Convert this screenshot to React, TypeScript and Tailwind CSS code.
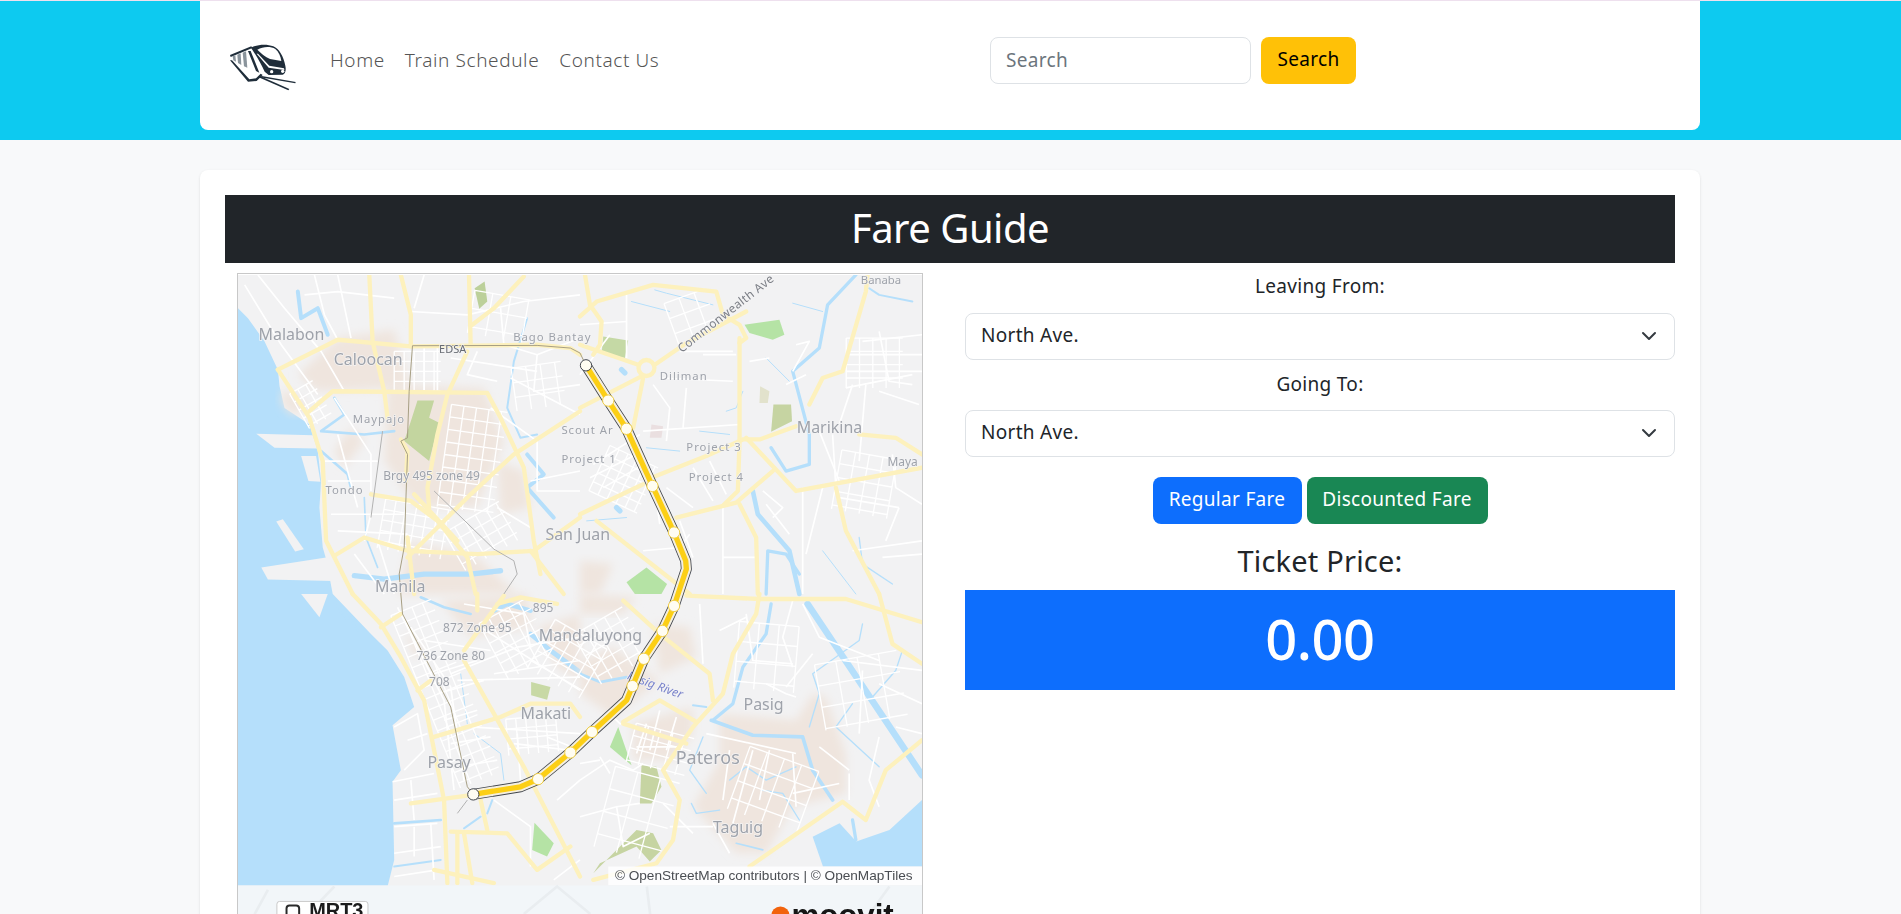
import type { ReactNode } from 'react';

// map coordinates are in a 3x space, one group per quadrant of the picture
type Quad = {
  at: string;
  tan: string[];
  park: [string, string][];
  land: string[];
  water: [number, string][];
  streets: string[];
  roads: string[];
};

const quads: Quad[] = [
  {
    at: 'translate(0 0)',
    tan: [
      '300,190 470,165 520,340 240,350 180,300',
      '450,330 740,340 800,500 720,700 540,700 440,560',
      '780,560 860,590 880,700 790,720',
      '140,340 220,400 160,420 130,380',
      '340,460 380,500 320,580 290,530',
      '520,800 720,850 840,960 480,960',
    ],
    park: [
      ['#c3d59f', '540,378 590,378 575,430 605,445 575,560 500,500 520,440'],
      ['#bcd09a', '712,40 742,20 750,80 726,102'],
    ],
    land: [
      '55,478 225,482 238,522 110,520',
      '190,545 235,545 248,622 212,620',
      '115,742 135,735 198,825 172,832',
      '70,880 265,850 340,875 320,922 90,916',
    ],
    water: [
      [12, '180,50 190,130 240,100 270,180'],
      [8, '290,370 320,420 250,470 380,480 470,470'],
      [8, '250,530 330,600 340,640'],
      [6, '870,130 830,260 810,400 850,490 900,480'],
      [12, '870,540 920,600 870,640 950,730'],
      [16, '350,905 440,915 560,900 700,900 790,890'],
      [5, '380,670 385,790 420,880'],
    ],
    streets: [
      '60,0 140,100 250,230 320,350',
      '20,30 130,210 240,360',
      '300,0 340,190', '200,60 300,50 470,70',
      '230,0 260,120 300,195',
      '520,110 690,120 860,80 1029,60',
      '560,0 530,100', '790,100 800,210 900,240 1029,190',
      '900,240 890,350 1029,330',
      '640,250 900,290', '560,220 560,350', '600,220 600,350',
      '720,230 690,300 780,320', '820,310 1029,420',
      '290,370 400,540 400,650', '300,480 360,700',
      '260,560 420,560', '270,620 400,620',
      '280,720 500,720', '300,770 510,780', '400,720 380,800',
      '350,840 440,960', '420,800 470,960',
      '760,400 900,500 900,650 1029,650',
      '880,620 1029,590', '780,700 880,760',
    ],
    roads: [
      '120,285 160,265 300,195 520,215 900,210 1000,220 1029,240',
      '395,0 405,200 440,350 450,430',
      '490,0 520,120 520,215',
      '695,0 700,210',
      '860,5 770,100 705,150',
      '690,230 630,360 600,480 570,640 575,700',
      '215,410 285,350 750,355 790,430 860,580 890,800 910,900',
      '120,285 215,430 255,560 265,800 345,960',
      '1029,410 830,540 700,660 560,800 510,850',
      '490,495 510,530 505,620',
      '400,660 520,680 600,740 690,850 715,960',
      '530,660 660,800',
      '290,845 380,790 510,830 720,840 890,830 1029,730',
      '880,830 980,960',
      '510,790 530,960',
    ],
  },
  {
    at: 'translate(1029 0)',
    tan: ['0,860 100,870 60,960 0,960'],
    park: [
      ['#c5d9a5', '70,185 145,197 135,250 65,235'],
      ['#b5e3a5', '495,150 600,135 615,180 580,195 510,175'],
      ['#c6d4a2', '582,390 635,390 638,440 575,472'],
      ['#e2e2cc', '542,335 570,350 565,385 540,385'],
      ['#eadfe0', '215,450 250,455 245,490 210,490'],
      ['#b5e3a5', '140,925 200,880 262,930 245,960 165,960'],
    ],
    land: [],
    water: [
      [10, '830,0 745,90 720,220 640,290 690,480 690,570 620,590 575,520'],
      [14, '520,650 535,720 630,830 660,960'],
      [6, '870,40 900,60 1000,80'],
      [3, '640,85 730,110'],
      [3, '225,45 260,55 400,90'],
      [3, '155,80 270,110'],
      [3, '440,410 470,400 490,350'],
      [3, '360,470 450,480'],
      [3, '560,250 630,320'],
      [3, '200,520 300,530'],
      [3, '20,740 140,730'],
      [16, '110,700 120,710'],
      [16, '125,285 135,295'],
      [4, '840,790 850,870 940,930'],
      [3, '730,830 830,960'],
      [10, '560,960 565,830 620,840 660,900'],
    ],
    streets: [
      '140,60 140,250', '300,230 460,230', '370,240 470,240', '240,310 460,320',
      '220,330 270,400 260,500', '320,340 310,460', '190,470 480,450',
      '650,210 690,200 640,290', '510,260 570,250', '620,330 680,300',
      '850,200 1029,180', '810,240 1029,240', '800,290 1029,290', '900,170 930,320 1000,330',
      '800,340 1000,300', '780,450 820,330', '720,470 780,620', '760,480 770,640',
      '860,330 840,560', '900,350 1020,390', '940,540 950,640 1029,690',
      '670,640 670,960', '730,640 680,840', '550,650 610,700 580,730',
      '560,690 630,780', '780,670 960,700', '960,700 920,800',
      '820,830 1029,800', '910,850 1029,840', '430,700 430,960', '430,850 530,850',
      '300,740 340,850', '190,830 300,820 330,780',
      '220,610 240,750', '40,570 180,480', '30,610 190,530', '70,640 210,560',
      '260,640 340,700', '340,580 400,680', '390,560 440,660',
      '90,180 0,300', '0,150 140,140',
    ],
    roads: [
      '0,400 195,300',
      '225,270 320,205 500,110',
      '480,190 480,500 475,650 432,692',
      '0,125 50,80 220,30 410,50 430,120 480,150 500,190 480,205',
      '15,0 30,90 65,140 60,210 40,240',
      '0,210 175,270',
      '190,310 160,460',
      '215,610 380,545 490,495 540,495 650,455',
      '500,490 650,650 1029,580',
      '0,720 190,630',
      '290,730 470,685 580,590',
      '480,690 530,790 535,960',
      '770,640 800,770 900,960',
      '690,390 730,310 790,290 860,50 865,0',
      '840,480 950,490 1029,540',
      '50,740 330,960',
    ],
  },
  {
    at: 'translate(0 960)',
    tan: ['500,110 560,170 530,190', '900,100 1029,60 1029,260 960,220', '610,20 870,0 880,100 700,130'],
    park: [
      ['#c8d9a5', '882,265 940,280 930,318 882,305'],
      ['#b5e3a5', '892,688 950,750 930,790 885,770'],
    ],
    land: ['190,0 270,0 245,70'],
    water: [
      [14, '880,120 940,170 1029,235'],
      [14, '770,50 810,30 880,50'],
      [8, '550,10 620,40 700,60'],
      [3, '670,240 690,390'],
      [3, '710,420 790,480 800,560'],
      [8, '470,690 610,680'],
      [6, '470,820 610,800'],
      [6, '680,705 730,670'],
      [6, '750,660 765,620'],
      [5, '290,30 330,80'],
      [5, '330,60 360,110'],
    ],
    streets: [
      '470,400 540,360 560,470 500,530', '510,440 570,420', '465,565 590,540',
      '470,620 600,600', '520,560 530,680', '470,700 600,690', '530,700 530,790',
      '470,780 610,760', '470,850 600,830', '580,690 590,860',
      '640,240 840,160 1029,130', '770,240 1029,200',
      '730,100 1029,290', '660,260 1029,250', '700,400 1029,420',
      '840,420 850,560', '930,430 1029,470', '830,450 1000,470',
      '770,620 880,700 880,820', '960,620 1029,560', '950,860 1029,800',
      '520,100 640,280 680,560', '480,40 620,320 650,590', '560,140 760,170',
      '590,240 720,200', '600,300 740,260', '620,380 720,350',
      '640,450 760,430', '660,520 780,500',
      '680,30 860,60 880,160',
    ],
    roads: [
      '345,0 430,90 490,190 560,320 620,620 630,870',
      '520,630 700,605',
      '590,430 790,370 880,330 1000,330 1029,370',
      '680,200 860,520 1029,850',
      '640,715 810,720 900,830 1000,760',
      '730,620 750,710',
      '680,720 705,870', '660,720 660,870',
      '590,830 770,870',
      '540,290 580,260',
      '490,60 430,100',
      '680,170 800,5',
      '720,0 720,50',
      '780,30 850,10 960,30',
    ],
  },
  {
    at: 'translate(1029 960)',
    tan: [
      '0,200 100,160 240,260 100,370 0,300',
      '220,90 330,100 350,190 240,240',
      '160,390 340,340 340,420 280,500 160,500',
      '420,360 650,380 700,300 740,310 800,480 800,600 640,640 560,780 470,780 340,640 420,500',
      '0,0 170,10 130,60 0,60',
    ],
    park: [
      ['#b5e3a5', '115,400 155,515 90,460'],
      ['#c6d4a2', '185,515 230,520 245,580 215,630 180,630'],
      ['#c6d4a2', '170,710 220,720 245,770 210,805 170,760 60,810 40,840'],
    ],
    land: [],
    water: [
      [10, '575,30 560,120 490,220 460,330 400,380'],
      [11, '395,380 520,425 670,430 700,530 760,620'],
      [20, '685,30 1029,545'],
      [8, '0,240 60,265 140,250'],
      [6, '340,335 380,340'],
      [4, '850,90 840,140 700,240 720,300 690,400'],
      [4, '820,330 770,400 900,520'],
      [4, '450,560 500,520 560,560 650,520'],
      [4, '545,590 610,600 660,680'],
      [4, '335,630 350,660 420,650'],
      [5, '470,750 550,770'],
      [4, '970,170 950,230 880,310'],
      [4, '370,430 330,530 380,600'],
      [10, '820,680 830,740'],
    ],
    streets: [
      '640,20 610,130 640,220', '360,30 370,210', '500,60 520,200 640,210',
      '670,30 720,130 900,200', '700,180 620,280', '420,110 500,70',
      '560,270 620,300 650,310', '790,200 1029,230', '850,230 840,420',
      '900,270 1029,330', '380,420 650,480', '450,470 430,620', '520,470 460,690',
      '570,470 540,620', '640,480 650,640', '720,460 810,530', '810,540 810,620',
      '0,560 90,500 160,530 190,510', '0,670 110,640 130,760 210,720',
      '110,640 180,630', '250,630 340,720', '270,700 400,700', '400,690 450,780',
      '160,400 120,390 90,360', '170,460 300,460', '200,390 170,480',
      '240,350 210,470', '290,370 260,470', '0,510 60,500', '60,490 90,540',
      '950,400 1029,420', '900,430 870,560 900,640', '640,600 780,570',
    ],
    roads: [
      '320,5 540,15 800,15 1029,85',
      '540,0 530,60 460,180 430,300 340,400 250,530 300,620 280,740 230,810 40,860',
      '130,20 240,120 390,240 400,320',
      '130,385 240,320 350,385',
      '130,390 320,450',
      '510,820 790,625 860,680 920,530 1029,440',
      '900,0 940,150 1029,210',
    ],
  },
];

// the MRT-3 line, in the full 3x space
const routeLine =
  '1047,272 1114,378 1169,463 1247,635 1312,775 1347,860 1349,885 1334,930 1312,996 1277,1071 1221,1155 1187,1237 1169,1280 1065,1375 1000,1437 903,1517 850,1540 708,1563';
const stations = [
  [1047, 272], [1114, 378], [1169, 463], [1247, 635], [1312, 775], [1312, 996], [1277, 1071],
  [1221, 1155], [1187, 1237], [1065, 1375], [1000, 1437], [903, 1517], [708, 1563],
];

// blocks of parallel streets for the dense parts of the city
const blocks = [
  { x: 620, y: 400, w: 170, h: 310, step: 38, rot: 8 },
  { x: 470, y: 230, w: 140, h: 120, step: 30, rot: 0 },
  { x: 430, y: 690, w: 200, h: 150, step: 32, rot: 10 },
  { x: 640, y: 720, w: 190, h: 130, step: 36, rot: -30 },
  { x: 180, y: 330, w: 80, h: 120, step: 28, rot: -30 },
  { x: 1080, y: 540, w: 160, h: 150, step: 30, rot: 25 },
  { x: 560, y: 980, w: 130, h: 560, step: 34, rot: -22 },
  { x: 760, y: 1000, w: 160, h: 190, step: 34, rot: -28 },
  { x: 900, y: 1070, w: 180, h: 170, step: 36, rot: 30 },
  { x: 1040, y: 1030, w: 170, h: 170, step: 36, rot: -30 },
  { x: 810, y: 1330, w: 150, h: 110, step: 30, rot: -5 },
  { x: 1180, y: 1370, w: 180, h: 120, step: 38, rot: 15 },
  { x: 1800, y: 540, w: 170, h: 180, step: 42, rot: 10 },
  { x: 1830, y: 190, w: 170, h: 150, step: 40, rot: 0 },
  { x: 1300, y: 60, w: 130, h: 130, step: 48, rot: -20 },
  { x: 1100, y: 1500, w: 200, h: 250, step: 70, rot: 15 },
  { x: 1500, y: 1450, w: 220, h: 200, step: 55, rot: 20 },
  { x: 1500, y: 1050, w: 180, h: 200, step: 60, rot: 5 },
  { x: 1750, y: 1150, w: 250, h: 200, step: 65, rot: -10 },
  { x: 700, y: 60, w: 170, h: 130, step: 55, rot: 10 },
  { x: 830, y: 270, w: 150, h: 130, step: 44, rot: -8 },
];

function Blocks() {
  const lines: ReactNode[] = [];
  blocks.forEach((b, i) => {
    const parts: string[] = [];
    for (let x = 0; x <= b.w; x += b.step) parts.push(`M${b.x + x} ${b.y}v${b.h}`);
    for (let y = 0; y <= b.h; y += b.step) parts.push(`M${b.x} ${b.y + y}h${b.w}`);
    lines.push(
      <path
        key={i}
        d={parts.join('')}
        transform={`rotate(${b.rot} ${b.x + b.w / 2} ${b.y + b.h / 2})`}
        stroke="#fff"
        strokeWidth="4"
        fill="none"
      />,
    );
  });
  return <>{lines}</>;
}

function Label(props: {
  x: number;
  y: number;
  size?: number;
  color?: string;
  spacing?: number;
  rotate?: number;
  italic?: boolean;
  children: string;
}) {
  const { x, y, size = 48, color = '#9ea2aa', spacing = 0, rotate, italic } = props;
  return (
    <text
      x={x}
      y={y}
      fontSize={size}
      fill={color}
      letterSpacing={spacing}
      fontStyle={italic ? 'italic' : undefined}
      transform={rotate ? `rotate(${rotate} ${x} ${y})` : undefined}
      stroke="#f4f4f5"
      strokeWidth="4"
      paintOrder="stroke"
      fontFamily="'Noto Sans', sans-serif"
    >
      {props.children}
    </text>
  );
}

function RouteMap() {
  return (
    <svg viewBox="0 0 2058 1923" className="block w-full h-[641px]">
      <defs>
        <filter id="soft" x="0" y="0" width="1" height="1">
          <feGaussianBlur stdDeviation="2.2" />
        </filter>
        <filter id="wash" x="-0.2" y="-0.2" width="1.4" height="1.4">
          <feGaussianBlur stdDeviation="14" />
        </filter>
        <clipPath id="frame">
          <rect width="2058" height="1837" />
        </clipPath>
      </defs>

      <g filter="url(#soft)">
        <g clipPath="url(#frame)">
          <rect width="2058" height="1923" fill="#f2f2f3" />

          {/* manila bay */}
          <polygon
            fill="#b5dffb"
            points="0,100 30,130 80,200 120,285 125,335 140,400 215,450 240,530 250,620 245,700 255,820 265,855 285,960 400,1080 450,1130 500,1210 530,1300 465,1355 490,1490 465,1525 470,1760 450,1840 0,1840"
          />
          <polygon
            fill="#b5dffb"
            points="1729,1690 1810,1650 1860,1705 1960,1670 2058,1580 2058,1780 1760,1780"
          />

          {quads.map((q) => (
            <g key={q.at} transform={q.at}>
              {q.tan.map((p) => (
                <polygon key={p} points={p} fill="#efe5de" filter="url(#wash)" />
              ))}
              {q.land.map((p) => (
                <polygon key={p} points={p} fill="#f2f2f3" />
              ))}
              {q.park.map(([c, p]) => (
                <polygon key={p} points={p} fill={c} />
              ))}
              {q.water.map(([w, p]) => (
                <polyline
                  key={p}
                  points={p}
                  fill="none"
                  stroke="#b5dffb"
                  strokeWidth={w}
                  strokeLinecap="round"
                  strokeLinejoin="round"
                />
              ))}
            </g>
          ))}

          <Blocks />

          {quads.map((q) => (
            <g key={q.at} transform={q.at}>
              {q.streets.map((p) => (
                <polyline key={p} points={p} fill="none" stroke="#fff" strokeWidth="5" strokeLinejoin="round" />
              ))}
            </g>
          ))}

          {quads.map((q) => (
            <g key={q.at} transform={q.at}>
              {q.roads.map((p) => (
                <polyline
                  key={p}
                  points={p}
                  fill="none"
                  stroke="#fdf1bd"
                  strokeWidth="13"
                  strokeLinecap="round"
                  strokeLinejoin="round"
                />
              ))}
            </g>
          ))}
          <circle cx="1229" cy="280" r="24" fill="#f2f2f3" stroke="#fdf1bd" strokeWidth="13" />

          {/* thin rail lines */}
          <g fill="none" stroke="#a79f84" strokeWidth="3">
            <polyline points="1047,272 1029,235 1000,220 900,212 525,213 515,350 510,490 490,500 510,540 500,820 485,900 495,1020 640,1300 690,1540 708,1563" />
            <polyline points="590,650 770,825 830,860 840,900 800,960" stroke="#b2b2b2" />
            <polyline points="435,470 400,730" stroke="#b2b2b2" />
            <polyline points="690,1580 660,1620" stroke="#b2b2b2" />
          </g>

          <Label x={62} y={197}>Malabon</Label>
          <Label x={288} y={270}>Caloocan</Label>
          <Label x={605} y={236} size={33} color="#666a72">EDSA</Label>
          <Label x={828} y={200} size={34} spacing={3}>Bago Bantay</Label>
          <Label x={345} y={447} size={34} spacing={3}>Maypajo</Label>
          <Label x={437} y={617} size={36}>Brgy 495 zone 49</Label>
          <Label x={263} y={660} size={34} spacing={3}>Tondo</Label>
          <Label x={925} y={797}>San Juan</Label>
          <Label x={412} y={955}>Manila</Label>
          <Label x={973} y={480} size={34} spacing={3}>Scout Ar</Label>
          <Label x={973} y={565} size={34} spacing={3}>Project 1</Label>
          <Label x={1269} y={315} size={34} spacing={3}>Diliman</Label>
          <Label x={1349} y={530} size={34} spacing={3}>Project 3</Label>
          <Label x={1356} y={620} size={34} spacing={3}>Project 4</Label>
          <Label x={1681} y={475}>Marikina</Label>
          <Label x={1954} y={575} size={36}>Maya</Label>
          <Label x={1874} y={27} size={34}>Banaba</Label>
          <Label x={1335} y={235} size={36} color="#7c7f86" rotate={-38} spacing={1}>Commonwealth Ave</Label>
          <Label x={887} y={1013} size={36}>895</Label>
          <Label x={617} y={1073} size={36}>872 Zone 95</Label>
          <Label x={537} y={1160} size={36}>736 Zone 80</Label>
          <Label x={575} y={1238} size={36}>708</Label>
          <Label x={905} y={1102}>Mandaluyong</Label>
          <Label x={850} y={1337}>Makati</Label>
          <Label x={570} y={1485}>Pasay</Label>
          <Label x={1521} y={1308}>Pasig</Label>
          <Label x={1317} y={1472} size={54}>Pateros</Label>
          <Label x={1429} y={1678}>Taguig</Label>
          <Label x={1169} y={1215} size={36} color="#7b84cb" rotate={20} italic>Pasig River</Label>

          {/* MRT-3 */}
          <polyline points={routeLine} fill="none" stroke="#41454d" strokeWidth="33" strokeLinejoin="round" />
          <polyline points={routeLine} fill="none" stroke="#f4efe0" strokeWidth="28" strokeLinejoin="round" />
          <polyline points={routeLine} fill="none" stroke="#fccf14" strokeWidth="16" strokeLinejoin="round" />
          {stations.map(([cx, cy], i) => (
            <circle
              key={cx}
              cx={cx}
              cy={cy}
              r="17"
              fill="#fffdf2"
              stroke={i === 0 || i === stations.length - 1 ? '#41454d' : '#f1cf45'}
              strokeWidth="3"
            />
          ))}

          <rect x="1114" y="1780" width="944" height="57" fill="#fff" fillOpacity="0.85" />
          <text x="1134" y="1822" fontSize="41" fill="#4a4d52" fontFamily="'Liberation Sans', sans-serif">
            © OpenStreetMap contributors | © OpenMapTiles
          </text>
        </g>

        {/* strip under the map */}
        <rect y="1837" width="2058" height="86" fill="#f2f6f9" />
        <path d="M50 1923 90 1850M210 1923 290 1840M860 1923 960 1840 1060 1923M1240 1923 1230 1840M1900 1923 1960 1840" stroke="#e9edf0" strokeWidth="8" fill="none" />
        <rect x="117" y="1885" width="274" height="60" rx="8" fill="#fff" stroke="#c9c9c9" strokeWidth="3" />
        <rect x="146" y="1897" width="38" height="40" rx="9" fill="none" stroke="#2b2b2b" strokeWidth="6" />
        <text x="214" y="1932" fontSize="60" fontWeight="700" fill="#1d1d1d" fontFamily="'Liberation Sans', sans-serif">
          MRT3
        </text>
        <circle cx="1632" cy="1928" r="28" fill="#f2630f" />
        <text x="1665" y="1958" fontSize="94" fontWeight="700" fill="#121212" fontFamily="'Liberation Sans', sans-serif">
          moovit
        </text>
      </g>
    </svg>
  );
}

function TrainLogo() {
  return (
    <svg viewBox="0 0 270 210" className="w-[90px] h-[70px] shrink-0">
      <g fill="#1f2d3a">
        {/* nose */}
        <path d="M93 50C112 40 140 38 160 46 178 54 190 76 196 104 199 118 196 128 188 131L146 132 134 122C124 100 110 76 93 50Z" />
        {/* carriages */}
        <path d="M30 72 94 46 97 51 32 78Z" />
        <path d="M84 60 92 60 118 125 108 120Z" />
        <path d="M30 88 36 88 88 145 108 142 122 128 128 132 110 150 84 152Z" />
        <path d="M125 135 227 153 226 157 120 139Z" />
        <path d="M114 138 120 135 208 174 205 178Z" />
      </g>
      <g fill="#fff">
        <path d="M112 56C130 46 152 46 166 54 176 62 182 76 184 90L150 84C136 78 122 66 112 56Z" />
        <path d="M110 68 114 68 148 104 192 112 193 117 146 110Z" />
        <circle cx="155" cy="122" r="5" />
        <circle cx="188" cy="121" r="5" />
      </g>
      <g fill="#8a949c">
        <path d="M38 76 46 73 48 92 40 88Z" />
        <path d="M52 71 62 67 64 102 54 96Z" />
        <path d="M68 65 78 61 82 110 72 106Z" />
      </g>
    </svg>
  );
}

function FareSelect() {
  return (
    <div className="relative">
      <select className="w-full h-[47px] appearance-none bg-white border border-[#dee2e6] rounded-lg pl-[15px] pr-9 pb-[2px] text-[19px] tracking-[0.3px] text-[#212529]">
        <option>North Ave.</option>
        <option>Quezon Ave.</option>
        <option>GMA Kamuning</option>
        <option>Araneta Center-Cubao</option>
        <option>Santolan-Annapolis</option>
        <option>Ortigas</option>
        <option>Shaw Blvd.</option>
        <option>Boni Ave.</option>
        <option>Guadalupe</option>
        <option>Buendia</option>
        <option>Ayala Ave.</option>
        <option>Magallanes</option>
        <option>Taft Ave.</option>
      </select>
      <svg viewBox="0 0 16 16" className="absolute right-[18px] top-[15px] w-4 h-4 pointer-events-none">
        <path d="m2 5 6 6 6-6" fill="none" stroke="#343a40" strokeWidth="2" strokeLinecap="round" strokeLinejoin="round" />
      </svg>
    </div>
  );
}

export default function App() {
  return (
    <div className="h-[914px] overflow-hidden bg-[#f8f9fa] text-[#212529] font-['Noto_Sans',sans-serif]">
      <header className="bg-[#0dcaf0] border-t border-[#eee0ee] pb-[10px]">
        <nav className="ml-[200px] w-[1500px] h-[129px] pb-[10px] bg-white rounded-b-lg flex items-center pl-[20px]">
          <div className="mr-[20px] mt-[10px]">
            <TrainLogo />
          </div>
          <ul className="w-[660px] flex gap-5 text-[19px] font-light tracking-[0.6px] text-[#555]">
            <li>Home</li>
            <li>Train Schedule</li>
            <li>Contact Us</li>
          </ul>
          <form className="flex gap-[10px]">
            <input
              placeholder="Search"
              className="w-[261px] h-[47px] border border-[#dee2e6] rounded-lg px-[15px] pb-[2px] text-[19px] tracking-[0.3px] placeholder:text-[#6c757d]"
            />
            <button
              type="button"
              className="w-[95px] h-[47px] bg-[#ffc107] rounded-lg pb-[2px] text-[19px] tracking-[0.3px] text-black"
            >
              Search
            </button>
          </form>
        </nav>
      </header>

      <main className="ml-[200px] mt-[30px] w-[1500px] bg-white rounded-lg shadow-sm p-[25px]">
        <h1 className="h-[68px] pb-[2px] bg-[#212529] text-white text-[40px] tracking-[-0.5px] flex items-center justify-center">
          Fare Guide
        </h1>
        <div className="flex mt-[10px]">
          <div className="w-[725px] pl-3 shrink-0">
            <div className="w-[686px] border-x border-t border-[#c8c8c8]">
              <RouteMap />
            </div>
          </div>
          <div className="flex-1 pl-[15px] text-[19px] text-center">
            <label className="block leading-[27px] tracking-[0.3px] mb-[13px]">Leaving From:</label>
            <div className="text-left">
              <FareSelect />
            </div>
            <label className="block leading-[27px] tracking-[0.3px] mt-[11px] mb-[12px]">Going To:</label>
            <div className="text-left">
              <FareSelect />
            </div>
            <div className="mt-[20px] flex justify-center gap-[5px] tracking-[0.3px]">
              <button type="button" className="w-[149px] h-[47px] pb-[2px] bg-[#0d6efd] text-white rounded-lg">
                Regular Fare
              </button>
              <button type="button" className="w-[181px] h-[47px] pb-[2px] bg-[#198754] text-white rounded-lg">
                Discounted Fare
              </button>
            </div>
            <h2 className="mt-[18px] mb-[10px] text-[29px] tracking-[0.2px] leading-[38px]">Ticket Price:</h2>
            <div className="h-[100px] pb-[5px] bg-[#0d6efd] text-white text-[56px] font-medium tracking-[-0.5px] flex items-center justify-center">
              0.00
            </div>
          </div>
        </div>
      </main>
    </div>
  );
}
